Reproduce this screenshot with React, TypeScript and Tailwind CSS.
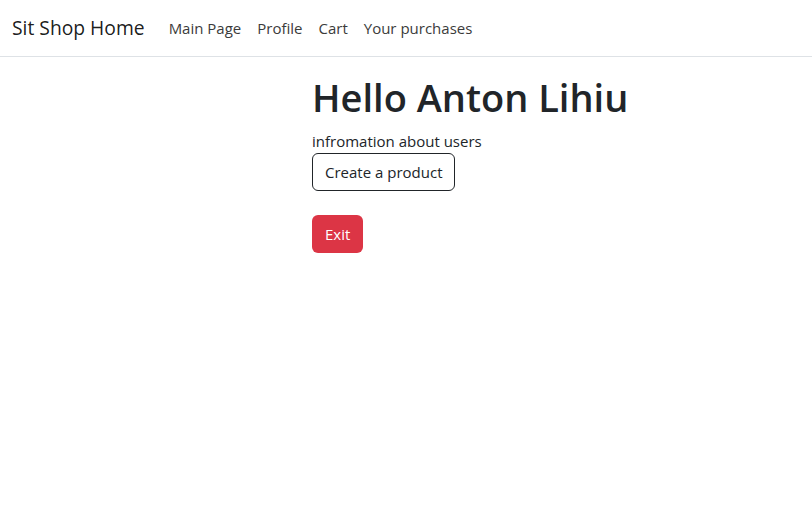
import React from 'react';

const links = ['Main Page', 'Profile', 'Cart', 'Your purchases'];

export default function App() {
  return (
    <div className="min-h-screen bg-white text-[#212529] font-['Open_Sans',sans-serif]">
      <nav className="h-[57px] flex items-center px-3 border-b border-[#dee2e6]">
        <a className="text-[19.3px] text-black/90 mr-4 leading-[30px]">Sit Shop Home</a>
        <ul className="flex items-center">
          {links.map((l) => (
            <li key={l}>
              <a className="block px-2 py-2 text-[15px] leading-6 text-[#3b3b3b]">{l}</a>
            </li>
          ))}
        </ul>
      </nav>
      <main className="pl-[312px] pt-[16px]">
        <h1 className="text-[38px] leading-[48px] font-semibold mb-2">Hello Anton Lihiu</h1>
        <div className="text-[15px] leading-6">infromation about users</div>
        <button className="h-[38px] px-3 text-[15px] leading-6 border border-[#212529] rounded-[6px] text-[#212529] bg-white">
          Create a product
        </button>
        <div className="mt-6">
          <button className="h-[38px] px-[13px] text-[15px] leading-6 rounded-[6px] text-white bg-[#dc3545]">
            Exit
          </button>
        </div>
      </main>
    </div>
  );
}
